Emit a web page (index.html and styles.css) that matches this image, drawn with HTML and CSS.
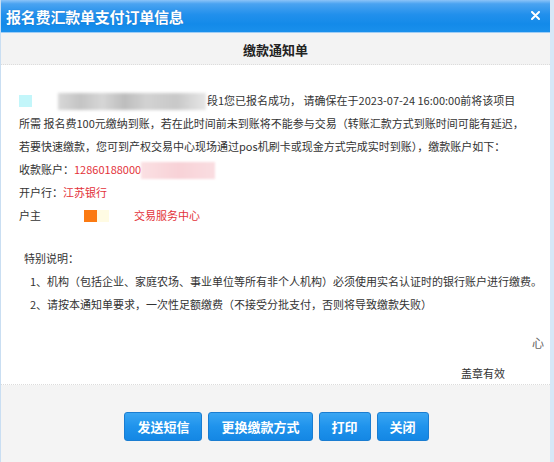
FILE: index.html
```html
<!DOCTYPE html>
<html lang="zh">
  <head>
    <title>报名费汇款单支付订单信息</title>
    <meta charset="UTF-8" />
    <meta name="viewport" content="width=device-width, initial-scale=1" />
    <link rel="stylesheet" href="styles.css">
  </head>
  <body>
    <div class="dialog">
      <div class="titleBar">
        <span class="titleText">报名费汇款单支付订单信息</span>
        <span class="closeBtn">
          <svg width="9" height="9" viewBox="0 0 9 9">
            <path d="M1 1 L8 8 M8 1 L1 8" stroke="#fff" stroke-width="2" stroke-linecap="round" />
          </svg>
        </span>
      </div>
      <div class="subHead">缴款通知单</div>
      <div class="content">
        <p class="line">
          <span class="mask cyan"></span><span class="mask blurGray"></span>段1您已报名成功， 请确保在于2023-07-24 16:00:00前将该项目
        </p>
        <p class="line">所需 报名费100元缴纳到账，若在此时间前未到账将不能参与交易（转账汇款方式到账时间可能有延迟，</p>
        <p class="line">若要快速缴款，您可到产权交易中心现场通过pos机刷卡或现金方式完成实时到账），缴款账户如下：</p>
        <p class="line">收款账户：<span class="red">12860188000</span><span class="mask blurPink"></span></p>
        <p class="line">开户行：<span class="red">江苏银行</span></p>
        <p class="line">
          户主<span class="mask orange"></span><span class="mask paleYellow"></span><span class="red">交易服务中心</span>
        </p>

        <p class="line note">特别说明：</p>
        <p class="line item">1、机构（包括企业、家庭农场、事业单位等所有非个人机构）必须使用实名认证时的银行账户进行缴费。</p>
        <p class="line item">2、请按本通知单要求，一次性足额缴费（不接受分批支付，否则将导致缴款失败）</p>

        <div class="stampTail">心</div>
        <p class="seal">盖章有效</p>
      </div>
      <div class="footer">
        <button class="btn">发送短信</button>
        <button class="btn">更换缴款方式</button>
        <button class="btn">打印</button>
        <button class="btn">关闭</button>
      </div>
    </div>
  </body>
</html>
```

FILE: styles.css
```css
body {
  padding: 0;
  margin: 0;
  font-family: "Noto Sans CJK SC", "Liberation Sans", sans-serif;
}
.dialog {
  width: 554px;
  height: 462px;
  display: flex;
  flex-direction: column;
  box-sizing: border-box;
  border-left: 1px solid #c9def2;
  border-right: 4px solid #d7e8f7;
  background: #fff;
}
.titleBar {
  height: 32px;
  flex: none;
  display: flex;
  align-items: center;
  justify-content: space-between;
  padding: 0 10px 0 5px;
  background: linear-gradient(to bottom, #8cc4f8 0, #4aa3f1 12%, #2290ec 45%, #138ae9 75%, #1a90ec 100%);
  border-bottom: 1px solid #9fcdf5;
}
.titleText {
  color: #fff;
  font-size: 15px;
  font-weight: bold;
  letter-spacing: -0.2px;
  text-shadow: 0 0 1px rgba(0, 40, 120, 0.4);
}
.closeBtn {
  display: flex;
  margin-top: -2px;
}
.subHead {
  height: 32px;
  flex: none;
  display: flex;
  align-items: center;
  justify-content: center;
  padding-top: 2px;
  box-sizing: border-box;
  background: #f3f3f3;
  border-bottom: 1px dotted #dcdcdc;
  color: #222;
  font-size: 13px;
  font-weight: bold;
}
.content {
  flex: 1;
  position: relative;
  padding: 24px 0 0 18px;
  color: #333;
  font-size: 11px;
  border-bottom: 1px dotted #dcdcdc;
}
.line {
  margin: 0;
  height: 23px;
  line-height: 23px;
  white-space: nowrap;
}
.red {
  color: #e3323a;
}
.mask {
  display: inline-block;
  vertical-align: middle;
}
.cyan {
  width: 13px;
  height: 12px;
  margin: -2px 26px 0 0;
  background: #c3f6fa;
}
.blurGray {
  width: 148px;
  height: 17px;
  margin: -2px 1px 0 0;
  background: linear-gradient(to right, #d8d8d8, #c4c4c4 15%, #d6d6d6 30%, #bdbdbd 45%, #d2d2d2 60%, #c8c8c8 80%, #e6e6e6);
  filter: blur(1.5px);
}
.blurPink {
  width: 74px;
  height: 17px;
  margin-top: -1px;
  background: linear-gradient(to right, #fbe0e3, #f8d2d7 50%, #fadde1);
  filter: blur(1px);
}
.orange {
  width: 13px;
  height: 12px;
  margin: -2px 0 0 43px;
  background: #fb7a12;
}
.paleYellow {
  width: 12px;
  height: 12px;
  margin: -2px 25px 0 0;
  background: #fffbe3;
}
.note {
  margin-top: 20px;
  padding-left: 5px;
}
.item {
  padding-left: 11px;
}
.stampTail {
  position: absolute;
  right: 6px;
  top: 270px;
  color: #666;
  font-size: 12px;
  line-height: 16px;
}
.seal {
  position: absolute;
  top: 298px;
  left: 460px;
  margin: 0;
  line-height: 20px;
}
.footer {
  height: 77px;
  flex: none;
  display: flex;
  align-items: center;
  justify-content: center;
  gap: 6px;
  padding: 5px 0 0 2px;
  box-sizing: border-box;
  background: #f4f4f4;
}
.btn {
  height: 29px;
  padding: 0 12px;
  border: 1px solid #1a7dd1;
  border-radius: 3px;
  background: linear-gradient(to bottom, #3aa6f3 0, #1f93ec 50%, #1487e4 100%);
  color: #fff;
  font-family: "Noto Sans CJK SC", "Liberation Sans", sans-serif;
  font-size: 13px;
  font-weight: bold;
  cursor: pointer;
}
```
